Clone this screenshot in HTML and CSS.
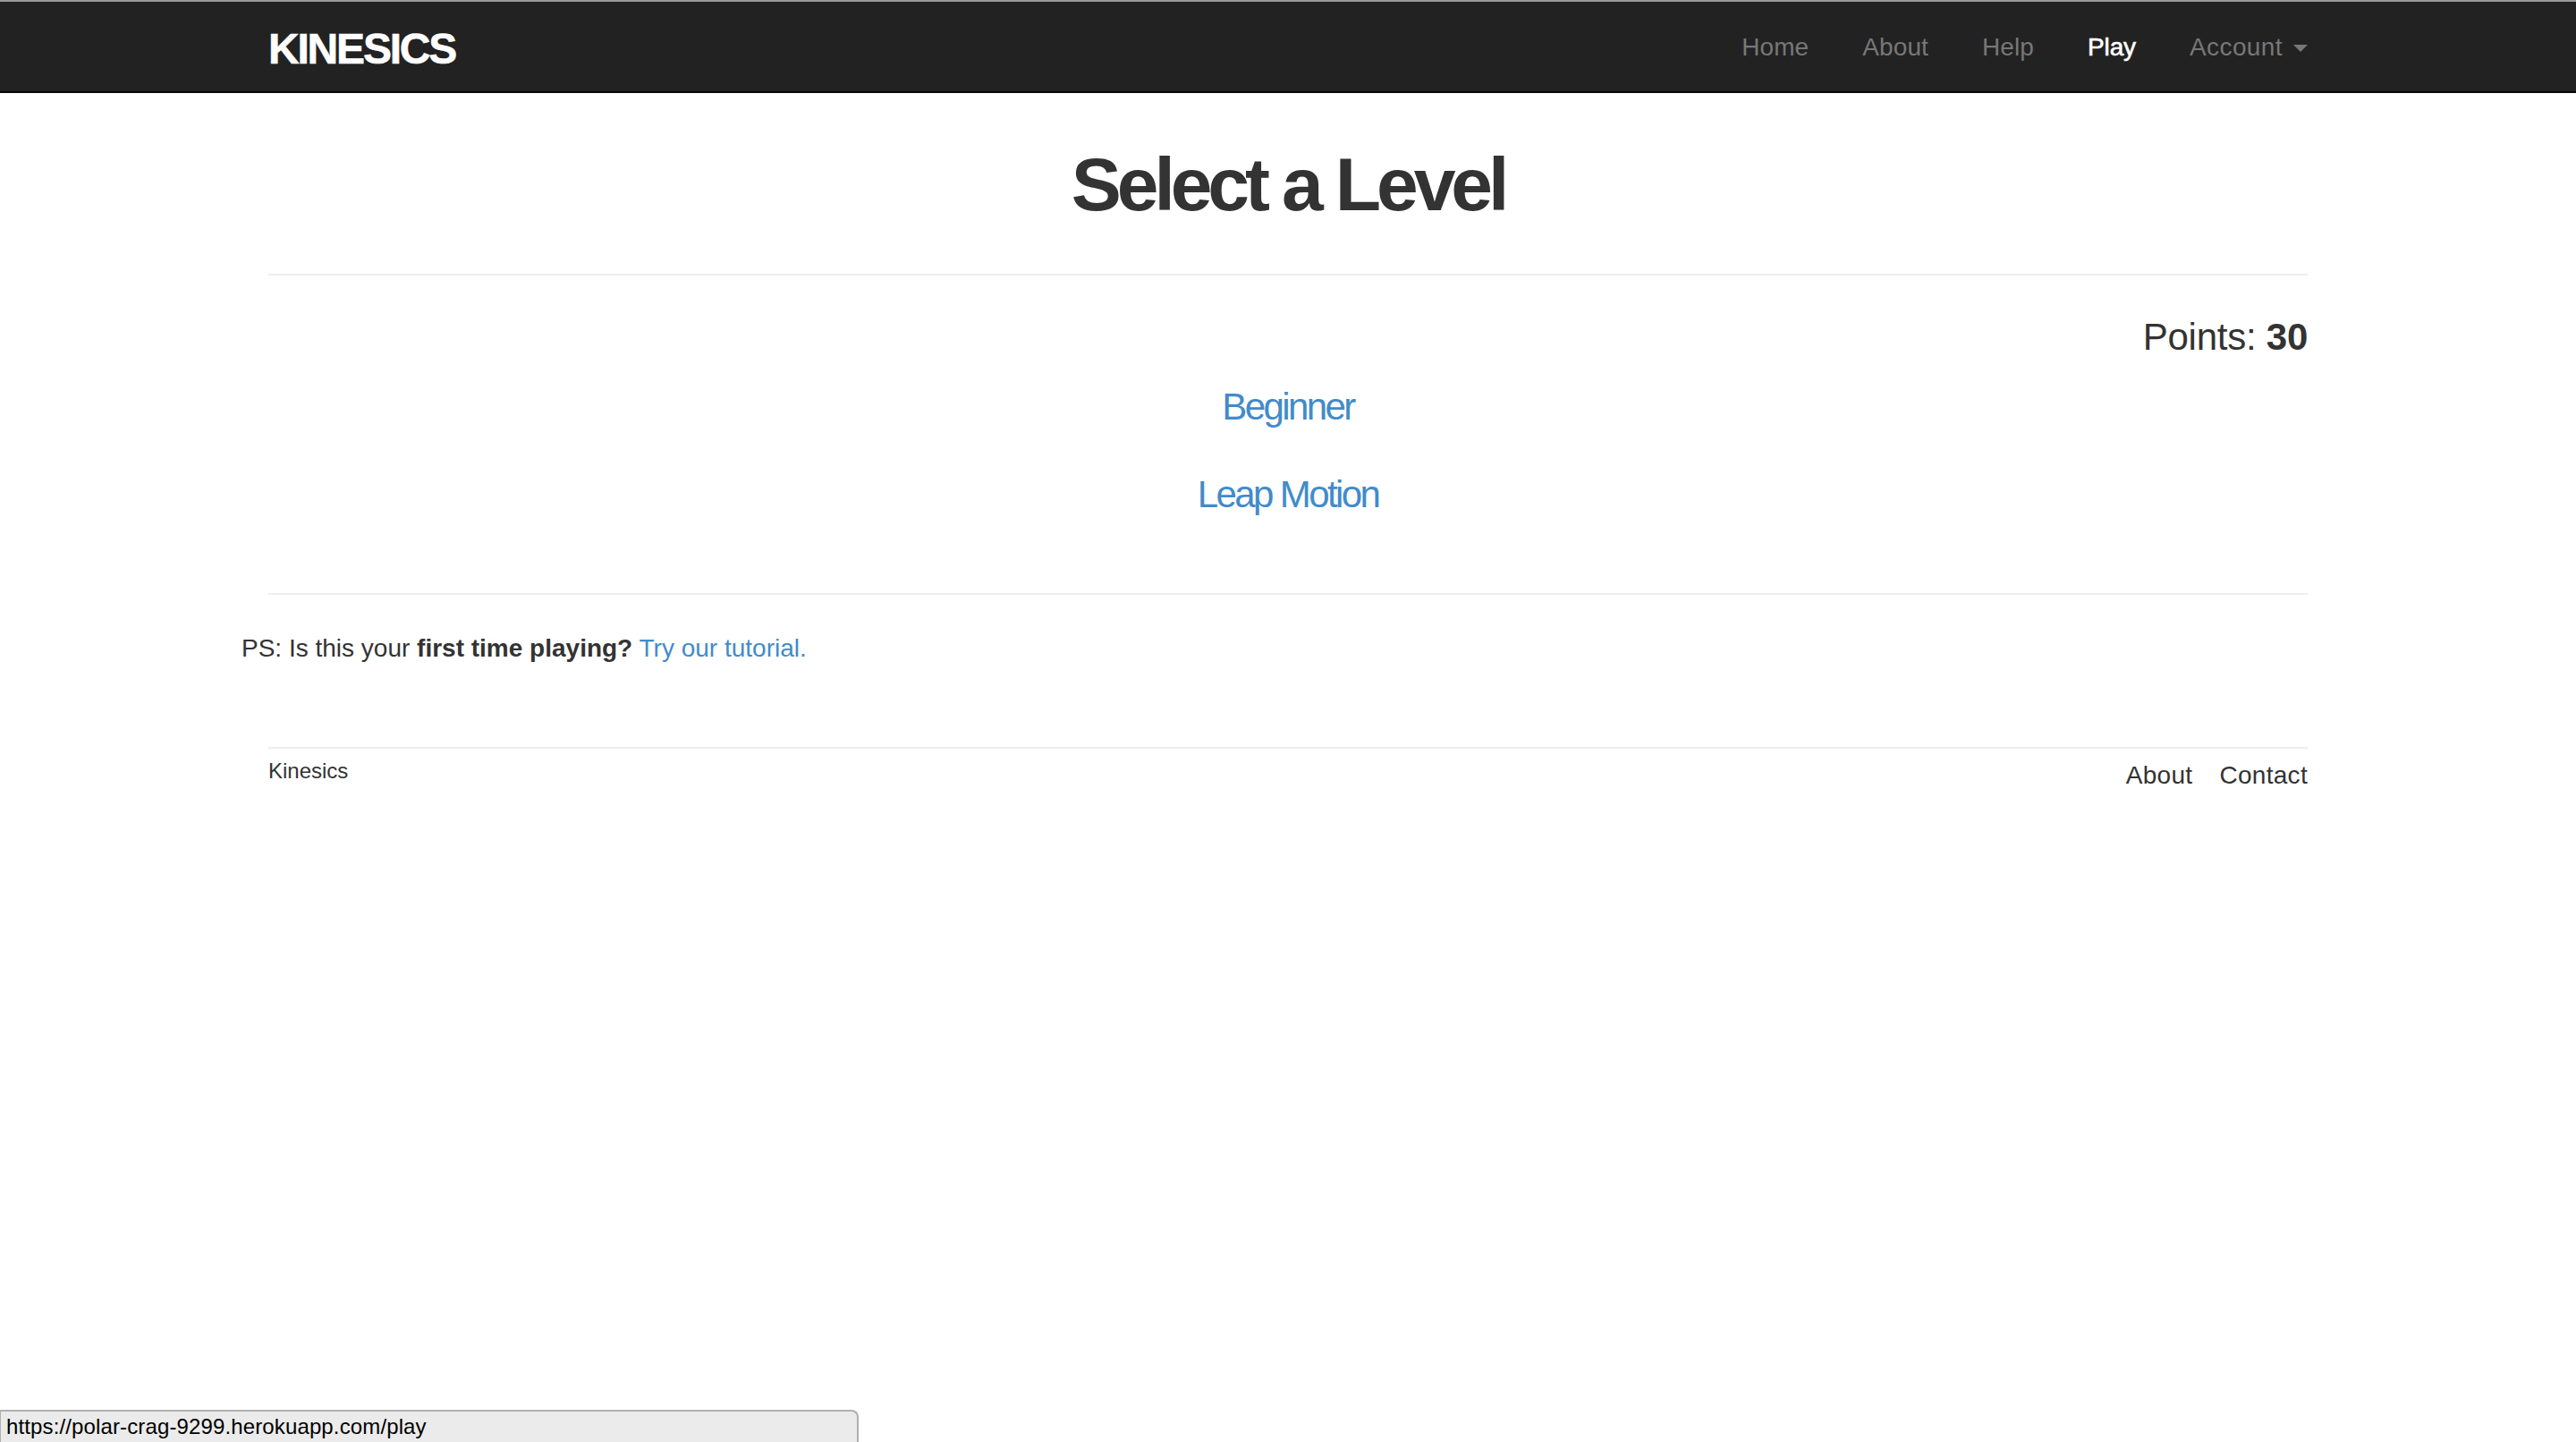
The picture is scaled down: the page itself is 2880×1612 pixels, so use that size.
FILE: index.html
```html
<!DOCTYPE html>
<html lang="en">
<head>
<meta charset="utf-8">
<title>Kinesics</title>
<link rel="stylesheet" href="styles.css">
</head>
<body>
<nav class="navbar">
  <div class="nav-inner">
    <a class="brand" href="#">KINESICS</a>
    <ul class="nav-links">
      <li><a href="#">Home</a></li>
      <li><a href="#">About</a></li>
      <li><a href="#">Help</a></li>
      <li><a class="active" href="#">Play</a></li>
      <li><a class="account" href="#">Account<span class="caret"></span></a></li>
    </ul>
  </div>
</nav>
<main class="container">
  <div class="inner">
    <header class="page-header"><h1>Select a Level</h1></header>
    <p class="points">Points: <strong>30</strong></p>
    <ul class="levels">
      <li><a href="#">Beginner</a></li>
      <li><a href="#">Leap Motion</a></li>
    </ul>
    <hr class="rule">
  </div>
  <p class="ps">PS: Is this your <strong>first time playing?</strong> <a href="#">Try our tutorial.</a></p>
  <footer class="footer">
    <span class="copy">Kinesics</span>
    <ul class="foot-links">
      <li><a href="#">About</a></li>
      <li><a href="#">Contact</a></li>
    </ul>
  </footer>
</main>
<div class="status">https://polar-crag-9299.herokuapp.com/play</div>
</body>
</html>
```
FILE: styles.css
```css
* { box-sizing: border-box; }
html, body { margin: 0; height: 100%; }
body {
  font-family: "Liberation Sans", Arial, sans-serif;
  font-size: 28px;
  line-height: 40px;
  color: #333;
  background: #fff;
}
a { text-decoration: none; color: #428bca; }
ul { list-style: none; margin: 0; padding: 0; }

.navbar {
  height: 104px;
  background: #222;
  border-top: 2px solid #999;
  border-bottom: 2px solid #080808;
}
.nav-inner {
  width: 2280px;
  height: 100px;
  margin: 0 auto;
  display: flex;
  justify-content: space-between;
  align-items: center;
}
.brand {
  color: #fff;
  font-size: 48px;
  line-height: 54px;
  padding-top: 6px;
  font-weight: 700;
  letter-spacing: -2.2px;
  -webkit-text-stroke: 0.6px #fff;
}
.nav-links { display: flex; gap: 60px; padding-top: 1px; }
.nav-links a { color: #777; letter-spacing: 0.1px; }
.nav-links a.account { letter-spacing: 0.4px; }
.nav-links a.active { color: #fff; -webkit-text-stroke: 0.6px #fff; letter-spacing: -0.1px; }
.caret {
  display: inline-block;
  margin-left: 12px;
  vertical-align: middle;
  border-top: 8px solid #777;
  border-left: 8px solid transparent;
  border-right: 8px solid transparent;
}

.container { width: 2340px; margin: 0 auto; }
.inner { padding: 0 30px; }
.page-header {
  height: 204px;
  border-bottom: 2px solid #eee;
  text-align: center;
}
h1 {
  margin: 0;
  padding-top: 52px;
  font-size: 84px;
  line-height: 100px;
  font-weight: 700;
  letter-spacing: -5.1px;
}
.points {
  margin: 39px 0 0;
  height: 60px;
  font-size: 42px;
  line-height: 60px;
  text-align: right;
  letter-spacing: -0.25px;
}
.levels { text-align: center; font-size: 42px; line-height: 60px; letter-spacing: -2.6px; margin-top: 18px; }
.levels li + li { margin-top: 38px; }
.rule { border: 0; border-top: 2px solid #eee; margin: 80px 0 0; }
.ps { margin: 40px 0 0; height: 40px; }
.footer {
  margin: 90px 30px 0;
  border-top: 2px solid #eee;
  display: flex;
  justify-content: space-between;
  padding-top: 10px;
}
.copy { font-size: 24px; line-height: 30px; }
.foot-links { display: flex; gap: 30px; }
.foot-links a { color: #333; letter-spacing: 0.3px; }
.status {
  position: fixed;
  left: 0;
  bottom: 0;
  width: 960px;
  height: 36px;
  padding-left: 6px;
  background: #ebebeb;
  border: 2px solid #b0b0b0;
  border-left-width: 1px;
  border-bottom: 0;
  border-radius: 0 8px 0 0;
  font-size: 24px;
  line-height: 34px;
  letter-spacing: 0.13px;
  color: #000;
}
```
